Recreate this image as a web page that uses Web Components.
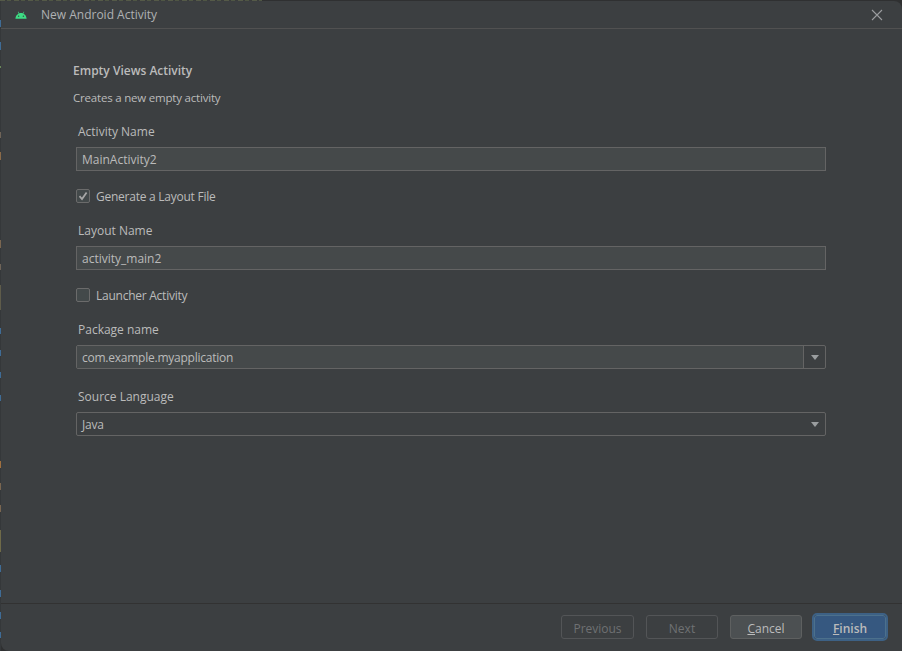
<!DOCTYPE html>
<html>
<head>
<meta charset="utf-8">
<title>New Android Activity</title>
<style>
    html, body { margin: 0; height: 100%; background: #2b2b2b; }
    body { font: 12px "Open Sans", "Noto Sans", sans-serif; color: #bbbbbb; overflow: hidden; }
</style>
</head>
<body>
<wizard-dialog>
    <span slot="title">New Android Activity</span>
    <form-heading title="Empty Views Activity" text="Creates a new empty activity"></form-heading>
    <text-field label="Activity Name" value="MainActivity2"></text-field>
    <check-field label="Generate a Layout File" checked></check-field>
    <text-field label="Layout Name" value="activity_main2"></text-field>
    <check-field label="Launcher Activity"></check-field>
    <combo-field label="Package name" value="com.example.myapplication" editable></combo-field>
    <combo-field label="Source Language" value="Java"></combo-field>
    <wizard-button slot="buttons" disabled style="width:73px">Previous</wizard-button>
    <wizard-button slot="buttons" disabled>Next</wizard-button>
    <wizard-button slot="buttons" plain><u>C</u>ancel</wizard-button>
    <wizard-button slot="buttons" primary><u>F</u>inish</wizard-button>
</wizard-dialog>

<script>
    // the editor behind the dialog only shows in a 1px strip on the left and top
    const specks = [[20,27,'#3f6c96'],[42,50,'#3f6c96'],[66,68,'#6a8759'],[132,138,'#6f6458'],[152,160,'#8a6a48'],
        [240,248,'#7a6650'],[264,270,'#6f6458'],[285,310,'#5f5c4a'],[328,334,'#3f6c96'],[350,356,'#3f6c96'],
        [372,378,'#3f6c96'],[395,401,'#3f6c96'],[461,468,'#a0703f'],[483,490,'#7a6650'],[505,512,'#7a6650'],
        [530,552,'#6f6a48'],[565,572,'#3f6c96'],[590,597,'#3f6c96'],[612,619,'#3f6c96'],[632,638,'#3f6c96']]
    const base = '#35383a'
    const strip = specks.map(([a, b, c]) => `${base} ${a}px, ${c} ${a}px ${b}px, ${base} ${b}px`).join(', ')

    customElements.define('wizard-dialog', class extends HTMLElement {
        constructor() {
            super()
            this.attachShadow({mode: 'open'}).innerHTML = `
                <style>
                    :host {
                        display: block; box-sizing: border-box; height: 651px; padding: 1px 0 0 1px;
                        background:
                            repeating-linear-gradient(to right, #555a48 0 5px, #3a3c3c 5px 7px, #4f5644 7px 11px, #3a3c3c 11px 14px) 0 0 / 262px 1px no-repeat,
                            linear-gradient(to bottom, ${strip}) 0 0 / 1px 100% no-repeat,
                            #2f3031;
                    }
                    .window { display: flex; flex-direction: column; height: 100%; background: #3c3f41; border-radius: 0 8px 0 8px; overflow: hidden; }
                    .titlebar { display: flex; align-items: center; box-sizing: border-box; height: 28px; padding: 0 19px 0 14px; border-bottom: 1px solid #515151; color: #afb1b3; flex: none; }
                    .titlebar svg { display: block; flex: none; }
                    .titlebar .name { flex: 1; margin-left: 14px; }
                    .content { flex: 1; padding: 33px 76px 0 72px; }
                    .footer { display: flex; justify-content: flex-end; align-items: flex-start; gap: 12px; box-sizing: border-box; height: 48px; flex: none; padding: 11px 16px 0 0; border-top: 1px solid #323232; }
                </style>
                <div class="window">
                    <div class="titlebar">
                        <svg width="12" height="8" viewBox="0 0 13 9"><path d="M.2 8.600C.4 6 1.800 3.900 3.900 2.800L2.900 1l.5-.3 1.100 1.900c1.300-.5 2.800-.5 4.100 0L9.700.7l.5.3-1.100 1.800c2.100 1.100 3.500 3.200 3.700 5.800z" fill="#3ddc84"/><circle cx="3.800" cy="5.800" r=".8" fill="#3c3f41"/><circle cx="9.200" cy="5.800" r=".8" fill="#3c3f41"/></svg>
                        <span class="name"><slot name="title"></slot></span>
                        <svg width="12" height="12" viewBox="0 0 12 12"><path d="M1 1l10 10M11 1L1 11" stroke="#9a9c9e" stroke-width="1.100" fill="none"/></svg>
                    </div>
                    <div class="content"><slot></slot></div>
                    <div class="footer"><slot name="buttons"></slot></div>
                </div>`
        }
    })

    customElements.define('form-heading', class extends HTMLElement {
        constructor() {
            super()
            this.attachShadow({mode: 'open'}).innerHTML = `
                <style>
                    :host { display: block; height: 61px; }
                    div { height: 18px; line-height: 18px; }
                    .title { font-weight: 600; margin-bottom: 9px; }
                    .text { font-size: 11.5px; letter-spacing: -.2px; }
                </style>
                <div class="title">${this.getAttribute('title')}</div>
                <div class="text">${this.getAttribute('text')}</div>`
        }
    })

    customElements.define('text-field', class extends HTMLElement {
        constructor() {
            super()
            this.attachShadow({mode: 'open'}).innerHTML = `
                <style>
                    :host { display: block; margin-left: 3px; }
                    .label { height: 18px; line-height: 18px; margin: 0 0 6px 2px; }
                    .input { box-sizing: border-box; height: 24px; line-height: 24px; padding: 0 5px; background: #45494a; border: 1px solid #646464; }
                </style>
                <div class="label">${this.getAttribute('label')}</div>
                <div class="input">${this.getAttribute('value')}</div>`
        }
    })

    customElements.define('check-field', class extends HTMLElement {
        constructor() {
            super()
            const mark = this.hasAttribute('checked')
                ? `<svg width="14" height="14" viewBox="0 0 14 14"><path d="M3.500 7.200l2.500 2.800 4.600-6.600" stroke="#a7a7a7" stroke-width="1.800" fill="none"/></svg>`
                : ''
            this.attachShadow({mode: 'open'}).innerHTML = `
                <style>
                    :host { display: flex; align-items: center; gap: 6px; height: 18px; margin: 16px 0 17px 3px; letter-spacing: -.25px; }
                    .box { box-sizing: border-box; width: 14px; height: 14px; background: #43494a; border: 1px solid #6b6b6b; border-radius: 2px; }
                    svg { display: block; margin: -1px; }
                </style>
                <span class="box">${mark}</span>
                <span>${this.getAttribute('label')}</span>`
        }
    })

    customElements.define('combo-field', class extends HTMLElement {
        constructor() {
            super()
            const editable = this.hasAttribute('editable')
            this.attachShadow({mode: 'open'}).innerHTML = `
                <style>
                    :host { display: block; margin: 0 0 19px 3px; }
                    .label { height: 18px; line-height: 18px; margin: 0 0 6px 2px; }
                    .combo { display: flex; box-sizing: border-box; height: 24px; border: 1px solid #646464; border-radius: 2px; }
                    .value { flex: 1; line-height: 24px; padding: 0 5px; letter-spacing: -.24px; }
                    .editable .value { background: #45494a; }
                    .arrow { display: flex; align-items: center; justify-content: center; width: 21px; }
                    .editable .arrow { border-left: 1px solid #646464; }
                    i { width: 0; height: 0; border: 4.500px solid transparent; border-top: 5px solid #9a9d9f; border-bottom: 0; }
                </style>
                <div class="label">${this.getAttribute('label')}</div>
                <div class="combo ${editable ? 'editable' : ''}">
                    <div class="value">${this.getAttribute('value')}</div>
                    <div class="arrow"><i></i></div>
                </div>`
        }
    })

    customElements.define('wizard-button', class extends HTMLElement {
        constructor() {
            super()
            this.attachShadow({mode: 'open'}).innerHTML = `
                <style>
                    :host { display: block; box-sizing: border-box; width: 72px; height: 24px; line-height: 25px; text-align: center; border: 1px solid #5e6060; border-radius: 3px; }
                    :host([disabled]) { color: #6f7173; border-color: #535557; }
                    :host([plain]) { background: #4c5052; }
                    :host([primary]) { background: #365880; font-weight: 600; border-color: #4c708c; outline: 2px solid #3d6185; }
                </style>
                <slot></slot>`
        }
    })
</script>
</body>
</html>
